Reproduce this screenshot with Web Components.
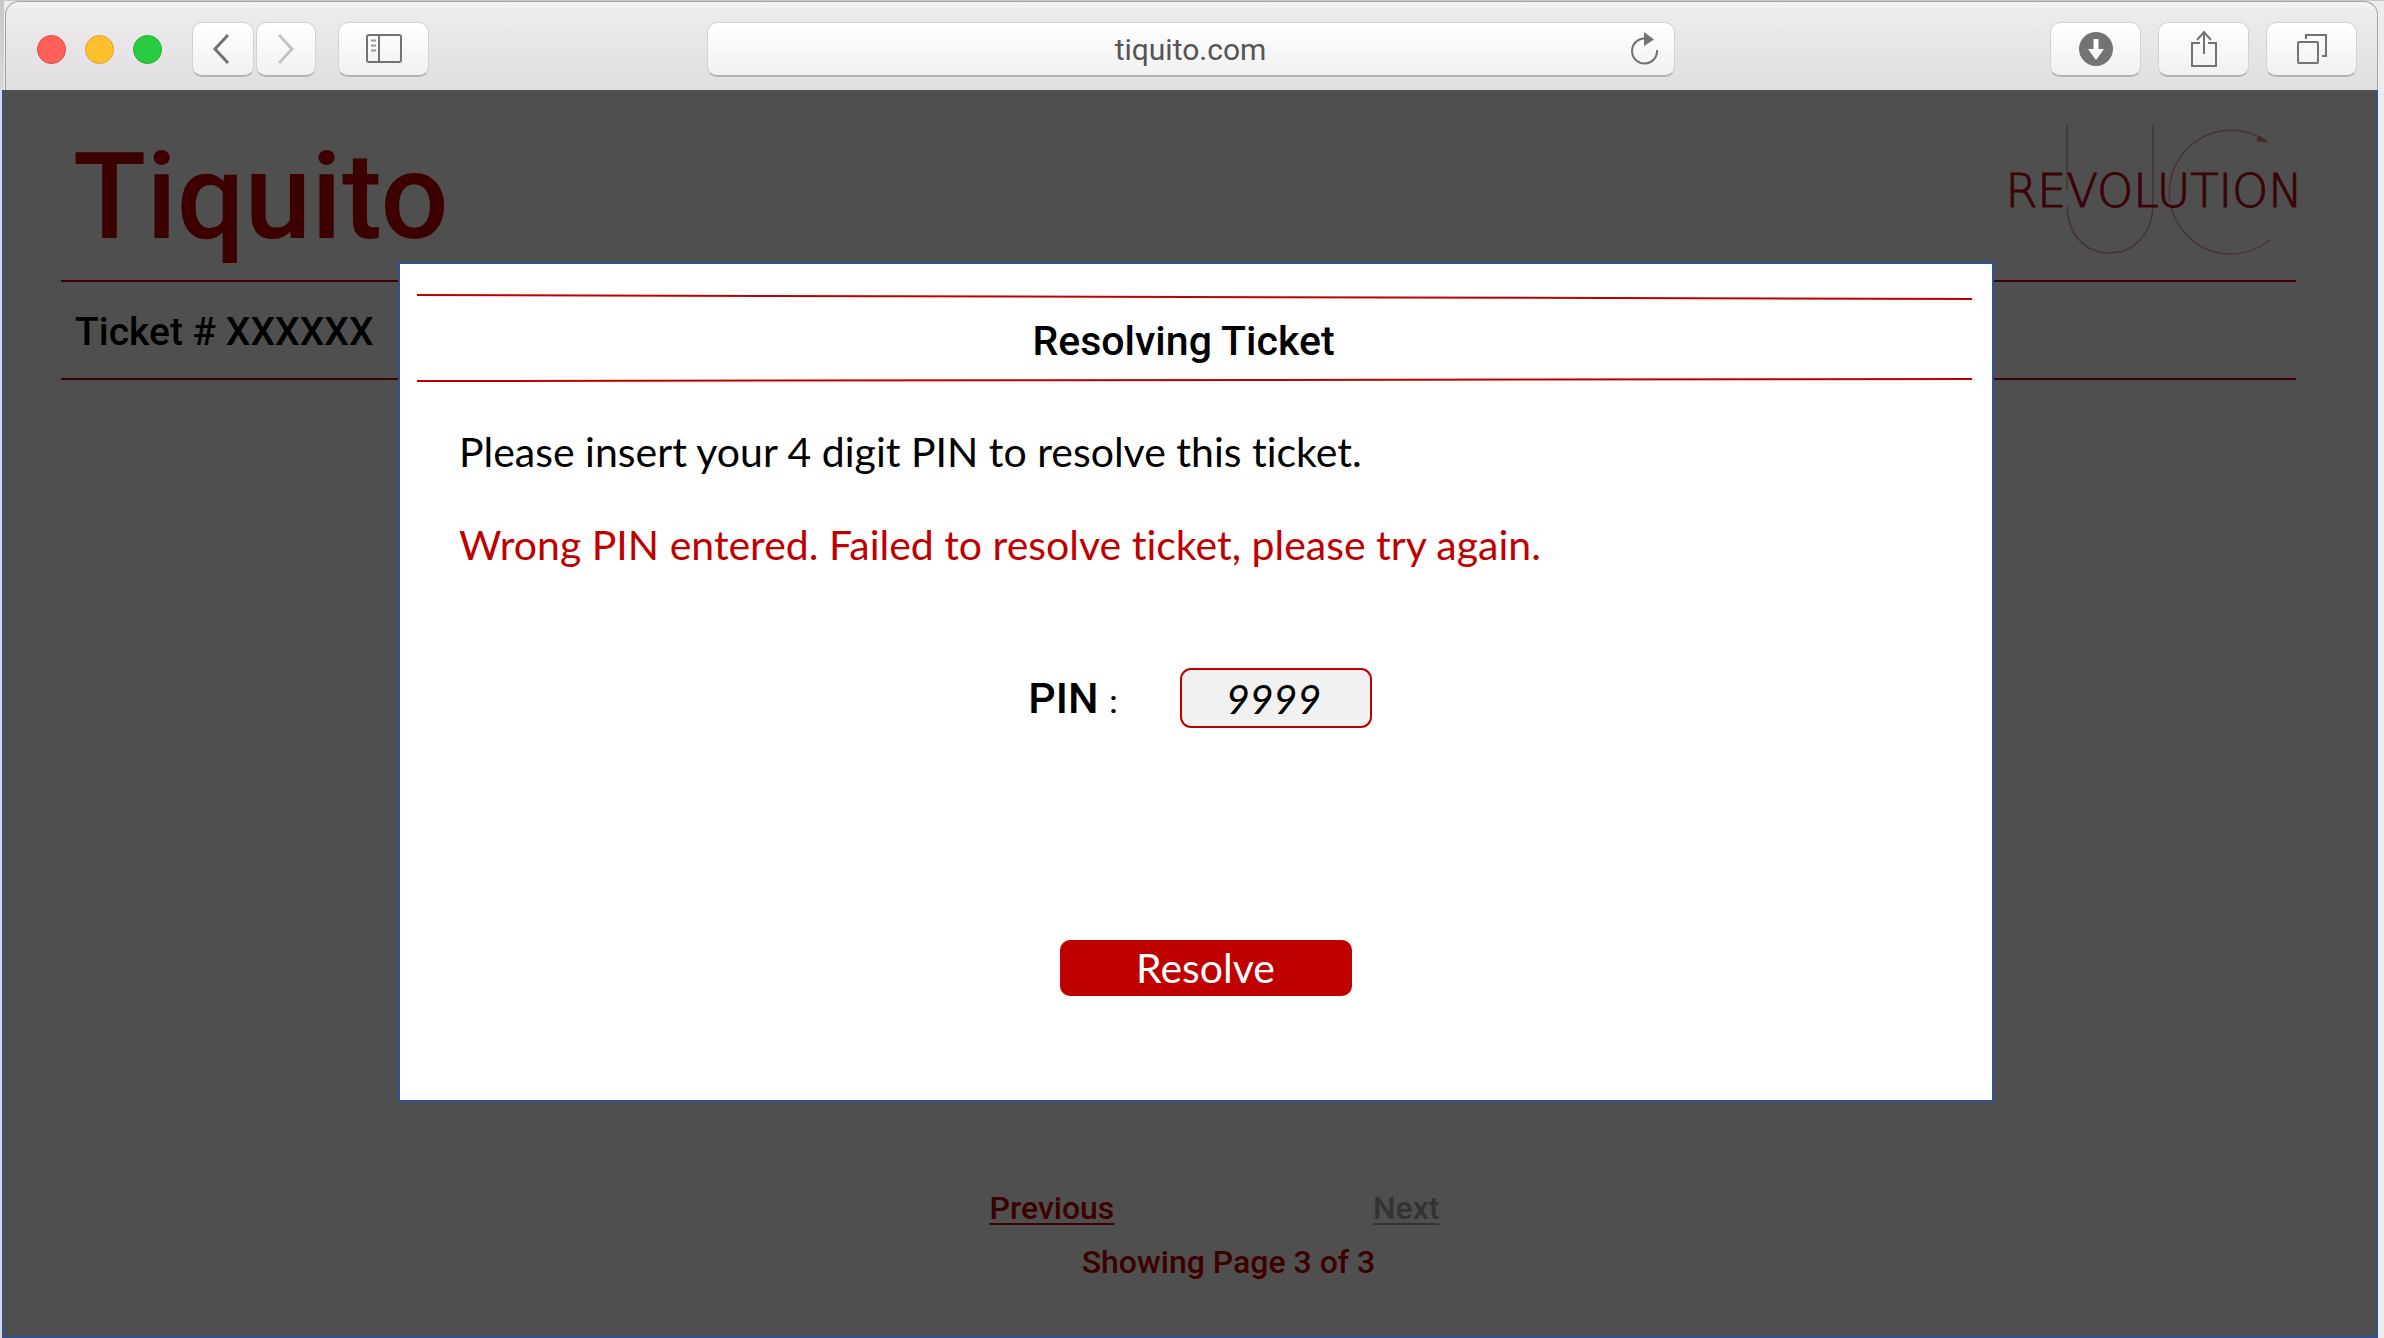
<!DOCTYPE html>
<html lang="en">
<head>
<meta charset="utf-8">
<title>Tiquito</title>
<style>
  :root {
    --red: #c00000;
    --blue: #2f528f;
    --din: Roboto, sans-serif;
    --body: Lato, sans-serif;
  }
  body { margin: 0; background: #ededed; }
</style>
</head>
<body>
<browser-window>
  <browser-toolbar slot="toolbar" url="tiquito.com"></browser-toolbar>
  <ticket-page>
    <uc-logo slot="logo"></uc-logo>
    <span slot="ticket">Ticket # XXXXXX</span>
    <page-nav slot="footer">Showing Page 3 of 3</page-nav>
  </ticket-page>
  <modal-dialog slot="modal">
    <span slot="title">Resolving Ticket</span>
    <pin-form></pin-form>
  </modal-dialog>
</browser-window>

<script>
const define = (name, html, setup) => {
  const template = document.createElement('template');
  template.innerHTML = html;
  customElements.define(name, class extends HTMLElement {
    constructor() {
      super();
      this.attachShadow({ mode: 'open' }).append(template.content.cloneNode(true));
    }
    connectedCallback() { if (setup) setup(this, this.shadowRoot); }
  });
};

define('browser-window', `
  <style>
    :host { display: flex; flex-direction: column; min-height: 100vh; box-sizing: border-box;
      padding: 1px 6px 0 2px; background: linear-gradient(#c8c8c8 0 2px, #d9d9d9 90px) left / 4px 100% no-repeat, linear-gradient(#c8c8c8, #c8c8c8) top / 100% 1px no-repeat, #ededed; }
    .view { flex: 1; display: grid; position: relative; box-sizing: border-box;
      border: 2px solid var(--blue); border-top: 0; background: #fff; }
    .shade { position: absolute; inset: 0; background: rgba(0, 0, 0, .69);
      padding: 172px 382px 0 394px; }
  </style>
  <slot name="toolbar"></slot>
  <div class="view"><slot></slot><div class="shade"><slot name="modal"></slot></div></div>
`);

define('browser-toolbar', `
  <style>
    :host { display: grid; grid-template-columns: 1fr 968px 1fr; align-items: center; box-sizing: border-box;
      height: 89px; margin-left: 3px; padding: 6px 20px 0 18px; border: 1px solid #a5a5a5; border-bottom: 0;
      border-radius: 14px 14px 0 0; background: linear-gradient(#f4f3f4, #edebee 8px, #e0dee1); }
    .group, .address { display: flex; align-items: center; }
    .lights { display: flex; gap: 19px; margin: 0 30px 0 13px; }
    i { width: 27px; height: 27px; border: 1px solid #e0483f; border-radius: 50%; background: #ff6059; }
    i:nth-child(2) { background: #ffc02f; border-color: #e0a123; }
    i:nth-child(3) { background: #28cd41; border-color: #1dad2b; }
    button, .address { height: 55px; box-sizing: border-box; border: 1px solid #d3d1d4; border-bottom: 2px solid #b3b1b4;
      border-radius: 10px; background: linear-gradient(#fff, #f1f1f1); }
    button { display: grid; place-items: center; width: 91px; padding: 0; }
    .back, .forward { width: 62px; }
    .back { padding-right: 4px; }
    .forward { margin: 0 22px 0 2px; width: 60px; }
    .right { justify-content: flex-end; gap: 17px; }
    input { flex: 1; min-width: 0; border: 0; outline: 0; background: none; text-align: center; padding: 2px 0 0 44px;
      font: 400 30px/40px Roboto, sans-serif; color: #555; }
    .reload { width: 44px; height: 50px; border: 0; background: none; place-items: center start; }
    svg { display: block; fill: none; stroke: #737373; stroke-width: 2; }
  </style>
  <div class="group">
    <div class="lights"><i></i><i></i><i></i></div>
    <button class="back" aria-label="Back"><svg width="18" height="32" style="stroke-width:3"><path d="M16 2 3 16 16 30"/></svg></button>
    <button class="forward" aria-label="Forward"><svg width="18" height="32" style="stroke:#c3c3c3;stroke-width:3"><path d="M2 2 15 16 2 30"/></svg></button>
    <button aria-label="Show sidebar"><svg width="36" height="29"><rect x="1" y="1" width="34" height="27" rx="2"/><path d="M13 1V28"/><path stroke="#999" d="M5 6.500h5M5 11.500h5M5 16.500h5"/></svg></button>
  </div>
  <div class="address">
    <input aria-label="Address">
    <button class="reload" aria-label="Reload"><svg width="30" height="34"><path d="M27 18A12.500 12.500 0 1 1 14.500 6.500"/><path d="M14 0 24 7.500 14 14Z" fill="#737373" stroke="none"/></svg></button>
  </div>
  <div class="group right">
    <button aria-label="Downloads"><svg width="34" height="34" style="stroke:none"><circle cx="17" cy="17" r="17" fill="#737373"/><path d="M14.500 7h5v10h5.500L17 28 9 17h5.500Z" fill="#fff"/></svg></button>
    <button aria-label="Share"><svg width="28" height="38"><path d="M10 13H2V36H26V13H18M14 24V2M7 10 14 2 21 10"/></svg></button>
    <button aria-label="Show tabs"><svg width="30" height="30"><rect x="1" y="8" width="20" height="21" rx="1"/><path d="M9 5V1H29V22H25"/></svg></button>
  </div>
`, (host, root) => { root.querySelector('input').value = host.getAttribute('url'); });

define('uc-logo', `
  <style>:host { display: block; } svg { display: block; overflow: visible; }
    text { font: 200 46px "DejaVu Sans", sans-serif; fill: #b8101c; stroke: #b8101c; stroke-width: 1; }
    path { fill: none; stroke: #b8101c; stroke-opacity: .4; stroke-width: 1.500; }
    .head { fill: #b8101c; fill-opacity: .5; stroke: none; }</style>
  <svg width="320" height="130" role="img" aria-label="UC Revolution">
    <path d="M73 1V66M73 82C74 112 92 129 115.500 129S158 111 159 81V1"/>
    <path d="M176 78A62 62 0 0 1 272 17M177 84C187 115 211 130 236 130Q258 130 276 116"/>
    <path class="head" d="M265 12 275 19 262 17Z"/>
    <text x="160" y="83" text-anchor="middle">REVOLUTION</text>
  </svg>
`);

define('ticket-page', `
  <style>
    :host { display: flex; flex-direction: column; padding: 24px 80px 54px 57px; color: var(--red); }
    header { display: flex; justify-content: space-between; padding: 0 0 3px 12px; }
    h1 { margin: 3px 0 0; font: 500 120px/160px var(--din); }
    ::slotted(uc-logo) { margin: 10px -18px 0 0; }
    h2 { margin: 0; padding: 18px 14px 14px; border: solid var(--red); border-width: 2px 0; font: 500 39px/64px var(--din); color: #000; }
    footer { margin-top: auto; }
  </style>
  <header><h1>Tiquito</h1><slot name="logo"></slot></header>
  <h2><slot name="ticket"></slot></h2>
  <footer><slot name="footer"></slot></footer>
`);

define('page-nav', `
  <style>
    :host { display: flex; flex-direction: column; align-items: center; gap: 14px; padding-left: 100px;
      font: 500 32px/40px var(--din); color: var(--red); }
    nav { display: flex; justify-content: space-between; width: 450px; padding-right: 28px; }
    a { color: inherit; text-underline-offset: 4px; text-decoration-thickness: 2px; }
    a[aria-disabled] { color: #a6a6a6; }
  </style>
  <nav><a href="#previous">Previous</a><a href="#next" aria-disabled="true">Next</a></nav>
  <slot></slot>
`);

define('modal-dialog', `
  <style>
    :host { display: block; border: 2px solid var(--blue); background: #fff; padding: 30px 20px 104px 17px; }
    svg { display: block; width: 100%; height: 6px; stroke: var(--red); stroke-width: 2; }
    line { vector-effect: non-scaling-stroke; }
    h2 { margin: 9px 22px 5px 0; font: 500 41px/64px var(--din); color: #000; text-align: center; }
  </style>
  <svg viewBox="0 0 100 6" preserveAspectRatio="none"><line x1="0" y1="1" x2="100" y2="5"/></svg>
  <h2><slot name="title"></slot></h2>
  <svg viewBox="0 0 100 6" preserveAspectRatio="none"><line x1="0" y1="3" x2="100" y2="1"/></svg>
  <slot></slot>
`);

define('pin-form', `
  <style>
    :host { display: block; font: 400 41px/48px var(--body); font-variant-ligatures: none; color: #000; }
    form { display: flex; flex-direction: column; align-items: center; }
    p { align-self: stretch; margin: 44px 0 0 42px; }
    .error { color: var(--red); margin-top: 45px; }
    .row { display: flex; align-items: center; gap: 62px; margin-top: 99px; padding-left: 11px; }
    label { font: 500 43px/60px var(--din); }
    small { font-size: 32px; line-height: 1; }
    input { width: 192px; height: 60px; box-sizing: border-box; border: 2px solid var(--red); border-radius: 11px;
      background: #f1f1f1; padding: 0 4px 0 0; text-align: center; font: italic 400 41px/48px var(--body); color: #000; }
    button { width: 292px; height: 56px; margin: 212px 0 0 22px; padding: 0; border: 0; border-radius: 10px;
      background: var(--red); color: #fff; font: inherit; }
  </style>
  <form>
    <p>Please insert your 4 digit PIN to resolve this ticket.</p>
    <p class="error" role="alert">Wrong PIN entered. Failed to resolve ticket, please try again.</p>
    <div class="row"><label for="pin">PIN <small>:</small></label><input id="pin" value="9999" maxlength="4"></div>
    <button type="button">Resolve</button>
  </form>
`);
</script>
</body>
</html>
